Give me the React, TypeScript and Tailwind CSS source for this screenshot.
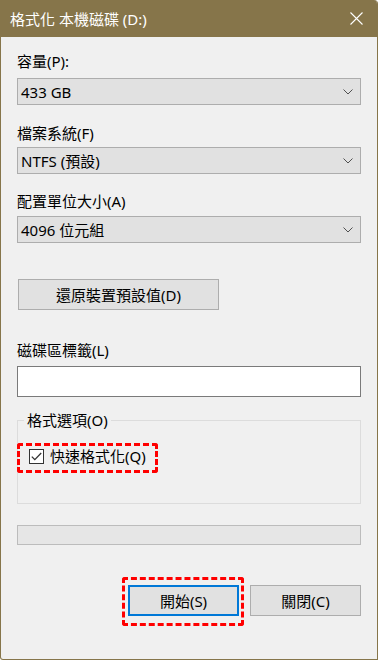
import React from 'react';

const font = { fontFamily: '"Noto Sans", "Noto Sans CJK TC", sans-serif' };

function Chevron() {
  return (
    <svg width="10" height="6" viewBox="0 0 10 6" className="shrink-0">
      <path d="M0.5 0.5 L5 5 L9.5 0.5" fill="none" stroke="#505050" strokeWidth="1" />
    </svg>
  );
}

function Select({ value }: { value: string }) {
  return (
    <div className="flex h-[27px] w-[344px] items-center justify-between border border-[#adadad] bg-[#e1e1e1] pl-[3px] pr-[7px] text-[15px] leading-[20px] text-black">
      <span>{value}</span>
      <Chevron />
    </div>
  );
}

function Label({ text, className }: { text: string; className: string }) {
  return <div className={`h-[20px] text-[15px] leading-[20px] text-black ${className}`}>{text}</div>;
}

export default function App() {
  return (
    <div className="h-[661px] w-[378px] bg-white" style={font}>
      <div className="flex h-[660px] w-[378px] flex-col overflow-hidden rounded-tr-[4px] rounded-bl-[3px] border-x border-b border-[#86754a] bg-[#f0f0f0]">
        {/* title bar */}
        <div className="-mx-px flex h-[37px] shrink-0 items-center justify-between bg-[#86754a] pl-[10px] pr-[15px]">
          <span className="text-[15px] leading-[20px] text-white">格式化 本機磁碟 (D:)</span>
          <svg width="13" height="13" viewBox="0 0 13 13">
            <path d="M0.5 0.5 L12.5 12.5 M12.5 0.5 L0.5 12.5" stroke="#fff" strokeWidth="1.1" />
          </svg>
        </div>

        <div className="flex flex-col pl-4">
          <Label text="容量(P):" className="mt-[14px]" />
          <div className="mt-[7px]">
            <Select value="433 GB" />
          </div>

          <Label text="檔案系統(F)" className="mt-[18px]" />
          <div className="mt-[4px]">
            <Select value="NTFS (預設)" />
          </div>

          <Label text="配置單位大小(A)" className="mt-[17px]" />
          <div className="mt-[5px]">
            <Select value="4096 位元組" />
          </div>

          <button className="ml-px mt-[36px] flex h-[31px] w-[201px] items-center justify-center border border-[#adadad] bg-[#e1e1e1] text-[15px] leading-[20px] text-black">
            還原裝置預設值(D)
          </button>

          <Label text="磁碟區標籤(L)" className="mt-[30px]" />
          <div className="mt-[6px] h-[31px] w-[344px] border border-[#7a7a7a] bg-white" />

          {/* format options group */}
          <div className="relative mt-[23px] h-[84px] w-[344px] border border-[#dcdcdc]">
            <span className="absolute left-[6px] top-[-11px] bg-[#f0f0f0] px-[3px] text-[15px] leading-[20px] text-black">
              格式選項(O)
            </span>
            <div className="ml-[11px] mt-[25px] flex items-center gap-[6px]">
              <div className="flex h-[15px] w-[15px] items-center justify-center border border-[#333] bg-white">
                <svg width="11" height="9" viewBox="0 0 11 9">
                  <path d="M0.8 4.6 L3.8 7.6 L10.2 1" fill="none" stroke="#333" strokeWidth="1.3" />
                </svg>
              </div>
              <span className="text-[15px] leading-[20px] text-black">快速格式化(Q)</span>
            </div>
            <div className="pointer-events-none absolute left-[-1px] top-[22px] h-[30px] w-[141px] rounded-[3px] border-[3px] border-dashed border-[#ff0000]" />
          </div>

          {/* progress bar */}
          <div className="mt-[21px] h-[20px] w-[344px] border border-[#bcbcbc] bg-[#e6e6e6]" />

          {/* buttons */}
          <div className="mt-[40px] flex w-[344px] justify-end gap-[11px]">
            <div className="relative">
              <button className="flex h-[31px] w-[111px] items-center justify-center border-2 border-[#0078d7] bg-[#e1e1e1] text-[15px] leading-[20px] text-black">
                開始(S)
              </button>
              <div className="pointer-events-none absolute left-[-6px] top-[-8px] h-[49px] w-[122px] rounded-[3px] border-[3px] border-dashed border-[#ff0000]" />
            </div>
            <button className="flex h-[31px] w-[111px] items-center justify-center border border-[#adadad] bg-[#e1e1e1] text-[15px] leading-[20px] text-black">
              關閉(C)
            </button>
          </div>
        </div>
      </div>
    </div>
  );
}
